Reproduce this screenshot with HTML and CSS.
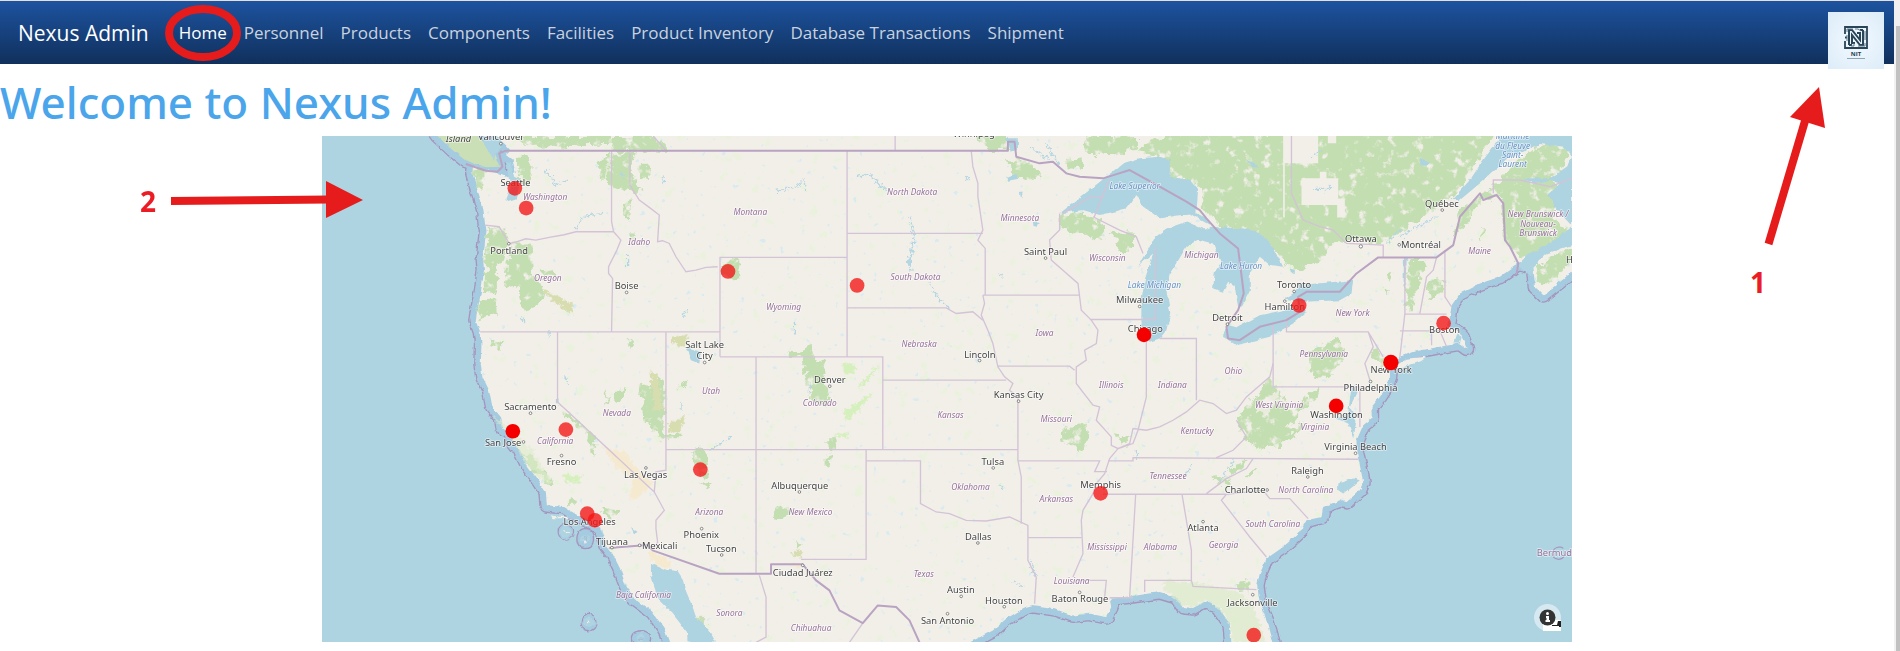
FILE: index.html
```html
<!DOCTYPE html>
<html lang="en">
<head>
<meta charset="utf-8">
<title>Nexus Admin</title>
<link rel="stylesheet" href="styles.css">
</head>
<body>
<div class="page">
<header class="navbar">
  <a class="brand" href="#">Nexus Admin</a>
  <nav class="links">
    <a class="link active" href="#">Home<svg class="ring" viewBox="0 0 76 56" aria-hidden="true"><ellipse cx="38" cy="28" rx="34" ry="24"/></svg></a>
    <a class="link" href="#">Personnel</a>
    <a class="link" href="#">Products</a>
    <a class="link" href="#">Components</a>
    <a class="link" href="#">Facilities</a>
    <a class="link" href="#">Product Inventory</a>
    <a class="link" href="#">Database Transactions</a>
    <a class="link" href="#">Shipment</a>
  </nav>
  <a class="logo" href="#" aria-label="NIT">
    <svg class="logo-mark" viewBox="0 0 24 23" aria-hidden="true">
      <path d="M1 8V1h22v21H1v-7M1 11.500h2" fill="none" stroke="#294558" stroke-width="1.800"/>
      <path d="M5 19V4h3l8 10V7h-3M19 4v15h-3L8 9v8h3M16 4h3M5 19h3" fill="none" stroke="#294558" stroke-width="2"/>
      <path d="M3 6v-3h6M21 17v3h-7M3 9v6M21 5v9M11 3h3l3 2M10 20H7M10 17v3" fill="none" stroke="#5c7686" stroke-width="1"/>
    </svg>
    <span class="logo-name">NIT</span>
    <span class="logo-rule"></span>
  </a>
  <svg class="callout-one" viewBox="0 0 80 220" aria-hidden="true">
    <path d="M22.500 163 59 40" class="shaft"/>
    <path d="M73 6 44 36 79 47Z" class="head"/>
    <text x="4" y="212">1</text>
  </svg>
</header>
<main>
  <h1>Welcome to Nexus Admin!</h1>
  <figure class="map">
  <svg class="map-art" viewBox="9 18 3747 1518" preserveAspectRatio="xMidYMid slice" role="img" aria-label="Facility map">
    <defs>
      <filter id="rough" x="-5%" y="-5%" width="110%" height="110%"><feTurbulence type="fractalNoise" baseFrequency=".09" numOctaves="3" seed="4"/><feDisplacementMap in="SourceGraphic" scale="24" xChannelSelector="R" yChannelSelector="G"/></filter>
      <filter id="forest" x="-5%" y="-5%" width="110%" height="110%"><feTurbulence type="fractalNoise" baseFrequency=".035" numOctaves="4" seed="4" result="n"/><feDisplacementMap in="SourceGraphic" in2="n" scale="40" xChannelSelector="R" yChannelSelector="G" result="d"/><feColorMatrix in="n" type="matrix" values="0 0 0 0 0  0 0 0 0 0  0 0 0 0 0  0 0 5 0 -2.900" result="h"/><feComposite in="d" in2="h" operator="out"/></filter>
      <filter id="speck" x="0" y="0" width="100%" height="100%"><feTurbulence type="fractalNoise" baseFrequency=".03" numOctaves="3" seed="21"/><feColorMatrix type="matrix" values="0 0 0 0 .8  0 0 0 0 .9  0 0 0 0 .7  12 0 0 0 -8"/><feComposite in2="SourceGraphic" operator="in"/></filter>
      <filter id="pond" x="0" y="0" width="100%" height="100%"><feTurbulence type="fractalNoise" baseFrequency=".05" numOctaves="2" seed="52"/><feColorMatrix type="matrix" values="0 0 0 0 .68  0 0 0 0 .83  0 0 0 0 .88  0 12 0 0 -8.700"/><feComposite in2="SourceGraphic" operator="in"/></filter>
      <filter id="edge" x="-2%" y="-2%" width="104%" height="104%"><feTurbulence type="fractalNoise" baseFrequency=".05" numOctaves="2" seed="9"/><feDisplacementMap in="SourceGraphic" scale="12" xChannelSelector="R" yChannelSelector="G"/></filter>
      <path id="land" d="M530-60V18L560 45 575 62 560 75 580 90 590 130 560 140 530 128 462 110 460 128 470 165 480 195 493 240 498 285 502 300 497 340 492 390 495 420 485 490 475 540 470 570 483 605 487 640 485 700 490 740 510 780 520 830 545 860 552 895 575 905 580 930 600 955 625 1005 660 1055 680 1085 683 1125 735 1130 775 1155 800 1165 845 1195 860 1245 880 1270 900 1310 920 1365 945 1405 1000 1445 1035 1495 1050 1536V1620H1900L1950 1536 2020 1500 2060 1465 2110 1435 2140 1427 2210 1437 2260 1455 2310 1450 2360 1460 2375 1430 2370 1405 2440 1397 2520 1385 2570 1400 2590 1430 2620 1433 2660 1410 2695 1430 2730 1480 2735 1536V1620H2875L2860 1536 2845 1480 2820 1420 2812 1365 2820 1330 2840 1285 2890 1250 2940 1205 2960 1170 3005 1160 3010 1130 3060 1110 3080 1115 3120 1080 3130 1055 3120 1005 3110 965 3110 930 3130 885 3155 865 3155 830 3180 800 3200 770 3210 740 3212 705 3240 680 3280 665 3360 650 3420 640 3440 655 3425 615 3385 590 3390 560 3395 525 3420 490 3480 460 3540 440 3595 400 3640 412 3645 470 3670 495 3720 455 3780 405 3850 380V-60Z"/>
      <path id="isle" d="M320-30 355 18 400 60 440 92 500 112 540 110 535 90 520 60 490 35 475 18V-30Z"/>
    </defs>
    <rect x="0" y="0" width="3800" height="1600" fill="#aed3e1"/>
    <g stroke-linejoin="round" filter="url(#edge)">
      <g fill="#a58fb8" stroke="#a595bd" stroke-width="46"><use href="#land"/><use href="#isle"/><ellipse cx="740" cy="1204" rx="2" ry="1"/><ellipse cx="798" cy="1225" rx="4" ry="9"/><ellipse cx="808" cy="1475" rx="1" ry="5"/><ellipse cx="965" cy="1525" rx="8" ry="3"/></g>
      <g fill="#a5cbe0" stroke="#a5cbe0" stroke-width="38"><use href="#land"/><use href="#isle"/><ellipse cx="740" cy="1204" rx="2" ry="1"/><ellipse cx="798" cy="1225" rx="4" ry="9"/><ellipse cx="808" cy="1475" rx="1" ry="5"/><ellipse cx="965" cy="1525" rx="8" ry="3"/></g>
      <use href="#land" fill="#f2efe9"/><use href="#isle" fill="#cbdfb6"/>
      <g fill="#f2efe9"><path d="M695 1155l20 4 35 0-5 5-45 0zM732 1202l18 4-4 6zM795 1225l8 12-4 3zM806 1468l5 12-5 2zM3220 712l40-26 60-7-20 14-60 22z"/></g>
    </g>
    <use href="#land" filter="url(#speck)" opacity=".7"/>
    <use href="#land" filter="url(#pond)"/>
    <g filter="url(#forest)">
      <g fill="#c3deb1">
        <path d="M585 18H1010L1040 62 900 62 880 58V42H745V55L650 45 610 40ZM1960 18H2065V60H2010ZM2290 18H2455V55H2420V75H2310ZM2455 65 2540 10H3530L3400 200 3250 300 3180 340 3050 330 2990 400 2930 420 2870 380 2830 320 2700 290 2650 240 2640 180 2620 150 2550 140 2530 85Z"/>
        <path d="M3400 330 3420 240 3480 190 3520 170 3600 85 3680 40 3740 60 3735 110 3690 150 3720 190 3690 260 3756 300 3700 360 3600 390 3555 330 3545 200 3490 210ZM3640 440 3660 395 3756 350V400L3670 470ZM3260 390 3320 390 3300 450 3275 540 3260 540ZM3330 450 3370 445 3370 490 3320 500Z"/>
        <path d="M595 80 640 85 640 150 625 175 600 150ZM462 115 490 120 490 180 470 170ZM500 290 560 300 565 335 550 400 530 400 530 490 500 480ZM580 340 640 340 645 440 680 470 670 510 630 540 610 545 600 470 560 480 570 370ZM480 510 525 505 530 560 475 570ZM660 410 700 420 705 445 675 440ZM865 70 950 65 930 120 965 180 950 190 880 175 865 150ZM835 90 865 80 860 150 840 160ZM910 220 940 210 935 265 910 255ZM955 110 985 110 995 150 965 145ZM925 310 950 310 945 330 925 325ZM1205 395 1260 385 1260 440 1205 445Z"/>
        <path d="M1410 660 1450 665 1470 640 1475 680 1515 690 1515 735 1530 800 1520 830 1480 810 1460 750 1450 700ZM1520 930 1550 930 1555 960 1525 955ZM1360 1140 1400 1130 1415 1150 1370 1165ZM1520 975 1535 970 1530 1010 1515 1000ZM2050 90 2130 95 2165 145 2120 150 2080 130ZM2240 90 2290 85 2290 120 2250 115ZM2220 255 2280 240 2300 265 2345 275 2350 330 2320 335 2300 310 2220 300ZM2370 305 2440 310 2440 360 2400 360ZM2220 910 2300 870 2310 910 2290 960 2240 940ZM2380 915 2430 920 2420 945Z"/>
        <path d="M2750 870 2790 820 2850 740 2880 790 2910 850 2960 800 3000 770 2990 800 2930 860 2890 910 2850 940 2790 940ZM2800 945 2950 880 2880 950 2820 960ZM2680 1045 2740 1040 2700 1065ZM2780 1025 2810 1015 2790 1040ZM2720 1015 2790 990 2740 1035ZM2980 665 3060 620 3070 670 3030 745 2980 740 2960 670ZM3170 650 3210 680 3190 710 3150 680ZM3195 440 3225 430 3210 455ZM3190 475 3210 470 3200 495ZM3480 290 3495 300 3485 325ZM2755 1350 2780 1350 2780 1390 2765 1385Z"/>
        <path d="M510 630 550 640 540 660 520 650ZM615 960 700 1050 690 1065 620 1000ZM750 1100 775 1105 770 1120 745 1120ZM845 1135 900 1140 895 1155 860 1155ZM715 820 830 920 825 985 800 900 755 880ZM960 760 1035 750 1035 915 1090 910 1080 930 1020 930 975 860ZM1115 960 1150 955 1165 1035 1145 1040ZM1140 1060 1180 1058 1170 1080ZM1110 740 1090 775 1080 760ZM850 820 870 770 860 820ZM880 800 920 770 905 820ZM920 640 940 630 930 670ZM1430 1230 1450 1240 1440 1265Z"/>
      </g>
    </g>
    <g filter="url(#rough)">
      <g fill="#dcebc9"><path d="M2535 1350 2640 1360 2760 1385 2795 1420 2820 1480 2840 1536H2740L2730 1480 2695 1430 2660 1410 2620 1430 2590 1425 2530 1375Z" opacity=".7"/><path d="M520 860 545 870 640 960 700 1060 680 1060 620 1000 570 910Z" opacity=".6"/></g>
      <g fill="#d5f0bd"><path d="M1570 700h35l3 25-25 10-15-12zM1570 845 1640 800 1660 790 1600 860 1580 870ZM1610 775 1680 700 1660 735 1625 770ZM1540 915 1590 905 1580 925ZM730 1035h60l-10 20h-40z"/></g>
      <g fill="#d8ddb0"><path d="M665 475 760 520 760 550 735 540 700 510ZM990 720 1015 740 1030 840 1005 840ZM1060 620 1110 610 1095 650 1060 640ZM1050 880 1100 855 1080 905 1045 905ZM1415 1275 1440 1255 1450 1285Z"/></g>
      <g fill="#f5ead0"><path d="M850 950 915 965 960 1020 1000 1060 960 1100 930 1110 940 1040 890 1010ZM990 1262 1055 1290 1055 1310 1030 1315 990 1285ZM1405 1300 1450 1303 1435 1315Z"/></g>
      <g fill="#c8ddb8"><path d="M1130 1465 1155 1455 1160 1485 1130 1490Z"/></g>
      <path d="M2800 830 2890 770 2870 810 2840 860Z" fill="#f2efe9" opacity=".8"/>
    </g>
    <g fill="#f2efe9"><path d="M2890 18h105V100h-100V262h-5ZM2945 145H3000V125H3020V145H3055V205H3075V262H3052V225H2945ZM3024 18h25v22h-25z"/></g>
    <g fill="#aed3e1" filter="url(#edge)">
      <path d="M2220 250 2310 180 2410 100 2460 85 2520 80 2550 90 2550 140 2610 150 2635 180 2630 250 2665 265 2670 285 2635 265 2610 250 2520 265 2465 225 2450 195 2420 235 2340 255 2290 240Z"/>
      <path d="M2455 410 2485 360 2505 320 2540 295 2600 275 2660 300 2700 330 2640 325 2600 350 2570 400 2550 430 2540 480 2552 550 2540 600 2520 625 2490 635 2470 620 2465 570 2465 510 2475 450 2500 370Z"/>
      <path d="M2670 290 2780 295 2820 310 2860 350 2890 410 2850 405 2820 380 2790 430 2790 480 2765 530 2755 530 2745 470 2725 455 2710 485 2680 475 2685 430 2705 400 2680 340 2620 325Z"/>
      <path d="M2720 580 2755 590 2820 555 2890 540 2950 530 2960 545 2920 580 2850 620 2750 645 2710 620ZM2895 505 2920 490 2940 465 3050 455 3100 450 3095 490 3060 510 2950 515ZM3545 18H3756V80L3730 50 3660 42 3600 70 3560 90 3480 160 3420 210 3395 210 3450 150 3490 90ZM3756 70V285L3710 235 3685 195 3720 160 3690 150 3640 160 3610 145 3690 145 3740 110ZM3590 405 3620 375 3690 340 3756 290V345L3680 370 3640 410 3638 440Z"/>
      <path d="M995 1330 995 1305 1003 1302 1040 1318 1075 1322 1090 1345 1095 1370 1120 1430 1130 1460 1170 1500 1190 1536H1105L1103 1505 1060 1450 1020 1410 1005 1370ZM560 95 575 100 585 140 605 150 590 205 560 215 575 175ZM535 18 548 50 530 75 525 90 505 60 490 35ZM1100 655 1145 665 1140 700 1115 690ZM3095 765 3110 790 3090 830 3110 870 3100 925 3085 880 3050 865 3085 850ZM3055 1060 3100 1045 3120 1050 3070 1090 3055 1080ZM3252 384h9l-6 90h-4zM710 805h8v14h-8zM935 1190 955 1205 945 1210ZM2060 25h35V60l-25 5zM2060 140l30-8 6 14-30 6zM2100 185l10 0-5 20zM2140 275l20 4-6 14-12-4z"/>
      <path d="M3410 610 3425 620 3420 640 3400 640ZM2780 90l25 10 10 12-20 0zM3300 85l30 10-10 15-18-2zM2910 415l15 5 0 12-12-3z"/>
    </g>
    <g fill="none" stroke="#b4d6e2" stroke-width="4" filter="url(#rough)">
      <path d="M1610 140 1650 132 1680 165 1710 185M1370 185 1440 165 1455 148 1462 180M1770 255 1785 330 1770 400 1775 425M1830 455 1850 495 1890 535M1780 335 1765 405M680 120 710 165 740 150M770 300 790 260 850 250M1030 140 1035 165M905 125 915 145M925 370v45M1105 540 1090 560M1935 135 1950 150M3240 320 3350 260M3200 340 3240 300M2450 960v30M2700 1055 2740 990M2620 1000 2590 1050M2130 1290 2150 1340M2080 1355 2110 1365M2050 1075 2040 1060M1470 795v-35M1425 570v40M2040 430 2045 440M605 560l10 18M690 600v20M735 735l10 20M1170 960 1235 920M1085 815v20M2980 175h60M3030 165l-15 20M3000 60l-20 20M2130 50 2190 90M2180 40 2220 110"/>
    </g>
    <g fill="none" stroke="#d3c3d6" stroke-width="4">
      <path d="M498 285 540 290 570 340 590 336 620 326 650 330 690 322 735 314 770 305H883M877 62V275L883 305 905 330 893 360 868 410V430L880 445 877 605M932 62V165L960 210 990 232 1020 255 1015 335 1030 332 1050 340 1070 380 1100 425 1130 420 1160 412 1195 410M1202 680V382H1583M483 605H1202M1202 680H1690V958M715 605V815L1005 1085M1040 605V1020L1010 1025 1005 1085 1035 1140 1010 1170V1195L1015 1235 1000 1260M1040 958H2095M1310 680V1330M1583 62V680M1583 310H1990M1583 533H1880L1910 550 1960 545 1990 570M1955 62 1960 110 1975 160V200L1990 300 1975 330 1997 355V495M1990 495H2280M1990 495 1995 520 1985 555 2005 600 2020 640 2035 710 2055 740 2080 760 2070 780 2095 800V990L2105 1040V1180M2035 708H2250L2265 720"/>
      <path d="M2220 250V300L2190 330 2195 390 2235 425 2275 460 2285 540 2315 570 2335 600 2330 640 2295 660 2300 690 2270 710 2270 760 2320 825 2340 830 2330 870 2375 920V945L2395 955 2370 985 2355 1030 2330 1060 2320 1090 2290 1140 2285 1170 2290 1270 2260 1340M2310 568H2508V350M2480 635V800L2455 900 2440 940 2395 955M1690 750H2060M1640 958V1287H1445M1640 992H1803V1120L1850 1145 1890 1150 1940 1170 2000 1172 2070 1160 2125 1185V1290L2150 1340 2145 1420M2125 1222H2285M2095 992H2340L2325 1024H2362M2260 1350H2360L2355 1400M2350 1092H2720M2365 992H2440V982L3115 987M2448 1092 2430 1400M2587 1092 2615 1260V1350H2475V1385M2615 1350 2620 1368 2810 1378M2720 1092 2705 1110 2790 1220 2840 1280M2720 1092 2830 1080 2850 1105H2910L2965 1165M2800 985 2780 1015 2720 1045 2660 1090M2690 982 2740 960 2780 920 2750 870M2395 955 2430 940 2440 895 2480 900 2520 890 2560 870 2600 845 2640 810 2680 820 2720 850 2750 840 2780 800 2850 740 2860 700"/>
      <path d="M2520 625H2630V810M2860 585V770H3150M2900 560V605H3145L3190 680M3145 605 3160 650 3135 700 3150 750M3255 552H3380M3240 602H3360L3380 650M3335 600V645M3255 382V550L3240 680M3350 382 3340 420 3320 440 3300 550M3375 360V500L3395 530M2915 18V190L2950 270 3000 290 3040 300 3080 340 3190 345V382M3520 190V150H3600L3690 170 3756 145M2320 260 2400 300 2450 320 2470 370M2230 250 2310 202 2350 202M2324 260 2368 150M3120 770V890M1002 18 1040 62M1727 18V62M1320 1335 1340 1400 1340 1520 1310 1536M1630 1478 1590 1536M2370 1402H2440"/>
    </g>
    <g fill="none" stroke="#b9a3c2" stroke-width="6" stroke-linejoin="round">
      <path d="M440 102 500 122 535 125 550 110 540 70 560 62H2065V35L2085 35 2090 80 2160 100 2200 95 2240 130 2280 140 2350 145 2430 120 2520 170 2600 215 2640 240 2660 265 2700 310 2755 355 2772 490 2755 540 2720 590 2725 625 2760 630 2820 590 2900 570 2940 545 2935 500 2960 485H3060L3110 430 3175 382H3350L3400 345 3420 260 3480 190 3490 210 3530 195 3550 220 3555 330 3570 350 3595 400 3590 430"/>
      <path d="M870 1253 985 1244 1000 1260 1200 1330H1355V1302H1450L1490 1350 1530 1380 1560 1440 1630 1478 1675 1425 1730 1430 1770 1470 1800 1536"/>
    </g>
    <path d="M3700 1266a18 14 0 0 1 30-12M3698 1270a18 16 0 0 0 34 8" fill="none" stroke="#a08fb8" stroke-width="3"/>
    <g class="dots">
      <circle cx="545" cy="41" r="4"/><circle cx="569" cy="341" r="4"/><circle cx="922" cy="487" r="4"/><circle cx="1156" cy="697" r="4"/><circle cx="1531" cy="768" r="4"/><circle cx="1980" cy="691" r="4"/><circle cx="2178" cy="384" r="4"/><circle cx="2460" cy="529" r="4"/><circle cx="2723" cy="582" r="4"/><circle cx="2895" cy="513" r="4"/><circle cx="2923" cy="484" r="4"/><circle cx="3123" cy="349" r="5"/><circle cx="3238" cy="344" r="4"/><circle cx="3367" cy="240" r="4"/><circle cx="3152" cy="754" r="4"/><circle cx="634" cy="849" r="4"/><circle cx="613" cy="935" r="4"/><circle cx="727" cy="976" r="4"/><circle cx="980" cy="1013" r="4"/><circle cx="1147" cy="1195" r="4"/><circle cx="1207" cy="1274" r="4"/><circle cx="878" cy="1252" r="4"/><circle cx="961" cy="1245" r="4"/><circle cx="1440" cy="1085" r="4"/><circle cx="1450" cy="1305" r="4"/><circle cx="2021" cy="1013" r="4"/><circle cx="2097" cy="813" r="4"/><circle cx="1975" cy="1238" r="4"/><circle cx="1925" cy="1398" r="4"/><circle cx="1884" cy="1450" r="4"/><circle cx="2054" cy="1429" r="4"/><circle cx="2280" cy="1386" r="4"/><circle cx="2650" cy="1174" r="4"/><circle cx="2842" cy="1079" r="4"/><circle cx="2964" cy="1040" r="4"/><circle cx="3107" cy="969" r="4"/><circle cx="2799" cy="1393" r="4"/>
    </g>
    <g class="city">
      <text x="418" y="36" class="slant">Island</text><text x="546" y="31">Vancouver</text><text x="1963" y="21">Winnipeg</text><text x="589" y="167">Seattle</text><text x="570" y="371">Portland</text><text x="922" y="477">Boise</text><text x="1156" y="653">Salt Lake</text><text x="1156" y="687">City</text><text x="1531" y="759">Denver</text><text x="1981" y="683">Lincoln</text><text x="2178" y="376">Saint Paul</text><text x="2460" y="520">Milwaukee</text><text x="2477" y="606">Chicago</text><text x="2723" y="572">Detroit</text><text x="2895" y="541">Hamilton</text><text x="2923" y="474">Toronto</text><text x="3123" y="335">Ottawa</text><text x="3303" y="353">Montréal</text><text x="3366" y="231">Québec</text><text x="3374" y="608">Boston</text><text x="3214" y="727">New York</text><text x="3152" y="781">Philadelphia</text><text x="3050" y="862">Washington</text><text x="3107" y="959">Virginia Beach</text><text x="2963" y="1031">Raleigh</text><text x="2776" y="1087">Charlotte</text><text x="2650" y="1202">Atlanta</text><text x="2798" y="1426">Jacksonville</text><text x="634" y="840">Sacramento</text><text x="552" y="947">San Jose</text><text x="727" y="1004">Fresno</text><text x="979" y="1044">Las Vegas</text><text x="811" y="1184">Los Angeles</text><text x="878" y="1244">Tijuana</text><text x="1021" y="1256">Mexicali</text><text x="1146" y="1222">Phoenix</text><text x="1206" y="1264">Tucson</text><text x="1441" y="1077">Albuquerque</text><text x="1450" y="1338">Ciudad Juárez</text><text x="2020" y="1005">Tulsa</text><text x="2097" y="804">Kansas City</text><text x="2343" y="1074">Memphis</text><text x="1976" y="1229">Dallas</text><text x="1924" y="1388">Austin</text><text x="1884" y="1480">San Antonio</text><text x="2053" y="1420">Houston</text><text x="2281" y="1416">Baton Rouge</text><text x="3738" y="399" class="from">Halifax</text>
    </g>
    <g class="state">
      <text x="678" y="210">Washington</text><text x="686" y="453">Oregon</text><text x="960" y="345">Idaho</text><text x="1293" y="255">Montana</text><text x="1778" y="195">North Dakota</text><text x="1788" y="450">South Dakota</text><text x="1393" y="540">Wyoming</text><text x="1799" y="650">Nebraska</text><text x="2101" y="272">Minnesota</text><text x="2363" y="394">Wisconsin</text><text x="2175" y="618">Iowa</text><text x="2375" y="773">Illinois</text><text x="2645" y="383">Michigan</text><text x="2558" y="774">Indiana</text><text x="2741" y="731">Ohio</text><text x="3012" y="679">Pennsylvania</text><text x="3098" y="557">New York</text><text x="3479" y="372">Maine</text><text x="3654" y="262">New Brunswick /</text><text x="3654" y="290">Nouveau-</text><text x="3654" y="318">Brunswick</text><text x="893" y="858">Nevada</text><text x="1175" y="790">Utah</text><text x="708" y="941">California</text><text x="1170" y="1153">Arizona</text><text x="1501" y="828">Colorado</text><text x="1893" y="862">Kansas</text><text x="2210" y="874">Missouri</text><text x="1953" y="1080">Oklahoma</text><text x="2210" y="1116">Arkansas</text><text x="1473" y="1153">New Mexico</text><text x="1813" y="1340">Texas</text><text x="2256" y="1362">Louisiana</text><text x="2362" y="1258">Mississippi</text><text x="2522" y="1258">Alabama</text><text x="2711" y="1252">Georgia</text><text x="2545" y="1045">Tennessee</text><text x="2632" y="911">Kentucky</text><text x="2878" y="834">West Virginia</text><text x="2985" y="898">Virginia</text><text x="2958" y="1089">North Carolina</text><text x="2859" y="1191">South Carolina</text><text x="973" y="1402">Baja California</text><text x="1230" y="1458">Sonora</text><text x="1475" y="1503">Chihuahua</text>
      <text x="3650" y="1277" class="bermuda">Bermuda</text>
    </g>
    <g class="lake"><text x="2445" y="176">Lake Superior</text><text x="2504" y="474">Lake Michigan</text><text x="2764" y="416">Lake Huron</text><text x="3578" y="28">Maritime</text><text x="3578" y="56">du Fleuve</text><text x="3578" y="84">Saint-</text><text x="3578" y="112">Laurent</text></g>
    <g class="pins">
      <circle cx="587" cy="175" r="22"/><circle cx="621" cy="234" r="22"/><circle cx="1226" cy="424" r="22"/><circle cx="1613" cy="466" r="22"/><circle cx="2938" cy="526" r="22"/><circle cx="3371" cy="579" r="22"/><circle cx="740" cy="898" r="22"/><circle cx="1143" cy="1018" r="22"/><circle cx="804" cy="1150" r="22"/><circle cx="827" cy="1170" r="22"/><circle cx="2343" cy="1089" r="22"/><circle cx="2802" cy="1514" r="22"/>
      <g class="solid"><circle cx="2473" cy="614" r="22"/><circle cx="3213" cy="697" r="23"/><circle cx="581" cy="903" r="22"/><circle cx="3049" cy="827" r="22"/></g>
    </g>
  </svg>
  <button class="info" type="button" aria-label="Map attribution">
    <svg viewBox="0 0 27 27" aria-hidden="true"><path d="M9 18h18v9H9z" fill="#fff"/><circle cx="13.500" cy="13.500" r="13.500" fill="#fff" opacity=".5"/><path d="M20 16h7v6h-9z" fill="#fff"/><path d="M18 21h5l1-4h3v6h-2v-1h-7z" fill="#222"/><circle cx="13.500" cy="13.500" r="8" fill="#333"/><circle cx="13.500" cy="9.500" r="1.500" fill="#fff"/><path d="M12 12h3v4h1v2h-4.500v-2h1v-2H12z" fill="#fff"/></svg>
  </button>
  <svg class="callout-two" viewBox="0 0 240 40" aria-hidden="true">
    <path d="M48 21 206 19.500" class="shaft"/><path d="M203 1 240 20 203 38Z" class="head"/><text x="17" y="32">2</text>
  </svg>
  </figure>
</main>
</div>
<div class="scrollbar" aria-hidden="true"></div>
</body>
</html>
```
FILE: styles.css
```css
* { box-sizing: border-box; }

body {
  display: flex;
  min-height: 100vh;
  margin: 0;
  overflow: hidden;
  background: #fff;
  font-family: "Open Sans", "Noto Sans", sans-serif;
}

.page { flex: 1; min-width: 0; border-top: 1px solid #e8dde3; }

.scrollbar {
  width: 6px;
  margin-top: 26px;
  border-left: 2px solid #f1f1f1;
  background: #c1c1c1;
  box-shadow: 0 -26px 0 #f1f1f1;
}

.navbar {
  position: relative;
  z-index: 1;
  display: flex;
  align-items: center;
  height: 63px;
  padding: 0 10px 0 18px;
  background: linear-gradient(#1d539f, #10305c);
}

.navbar a { color: #fff; text-decoration: none; }

.brand { margin-right: 22px; font-size: 21px; }

.links { display: flex; flex: 1; gap: 1px; }

.navbar .link {
  position: relative;
  padding: 8px;
  color: #c9d2df;
  font-size: 17px;
  line-height: 26px;
  white-space: nowrap;
}

.navbar .active { color: #fff; }

.ring {
  position: absolute;
  top: -7px;
  left: -6px;
  width: 76px;
  height: 56px;
  fill: none;
  stroke: #e61c1c;
  stroke-width: 8;
}

.logo {
  display: flex;
  flex-direction: column;
  align-items: center;
  align-self: flex-start;
  width: 56px;
  height: 57px;
  margin-top: 11px;
  padding-top: 14px;
  background: radial-gradient(#f2f9ff, #dcecf8);
}

.logo-mark { width: 24px; height: 23px; }

.logo-name {
  margin-top: 1px;
  color: #1f3b4f;
  font-size: 6px;
  font-weight: 700;
  line-height: 8px;
}

.logo-rule { width: 18px; height: 1px; background: #8fa3b1; }

.callout-one {
  position: absolute;
  top: 80px;
  right: 68px;
  width: 80px;
  height: 220px;
  overflow: visible;
}

.callout-two {
  position: absolute;
  top: 44px;
  left: -199px;
  width: 240px;
  height: 40px;
}

.shaft { fill: none; stroke: #e61c1c; stroke-width: 8; }
.head { fill: #e61c1c; }

.callout-one text,
.callout-two text {
  fill: #ec1c24;
  font-size: 28px;
  font-weight: 700;
}

h1 {
  margin: 12px 0 7px;
  color: #4aa5eb;
  font-family: "Noto Sans", sans-serif;
  font-size: 44px;
  font-weight: 500;
  line-height: 53px;
}

.map {
  position: relative;
  width: 66%;
  margin: 0 auto;
  font-family: "Noto Sans", sans-serif;
}

.map-art { display: block; width: 100%; height: auto; }

.dots { fill: #fff; stroke: #555; stroke-width: 2; }

.map-art text {
  text-anchor: middle;
  stroke: rgba(255, 255, 255, .6);
  stroke-width: 5;
  stroke-linejoin: round;
  paint-order: stroke;
}

.city { fill: #444; font-size: 28px; }
.map-art .from { text-anchor: start; }
.slant { font-style: italic; }
.state { fill: #957099; font-size: 25px; font-style: italic; }
.lake { fill: #6590c5; font-size: 25px; font-style: italic; }
.bermuda { font-size: 28px; font-style: normal; }
.map-art .bermuda { text-anchor: start; }

.pins { fill: rgba(244, 20, 20, .78); }
.solid { fill: #f50000; }

.info {
  position: absolute;
  right: 11px;
  bottom: 11px;
  width: 27px;
  height: 27px;
  padding: 0;
  border: 0;
  background: none;
}

.info svg { display: block; width: 27px; height: 27px; }
```
